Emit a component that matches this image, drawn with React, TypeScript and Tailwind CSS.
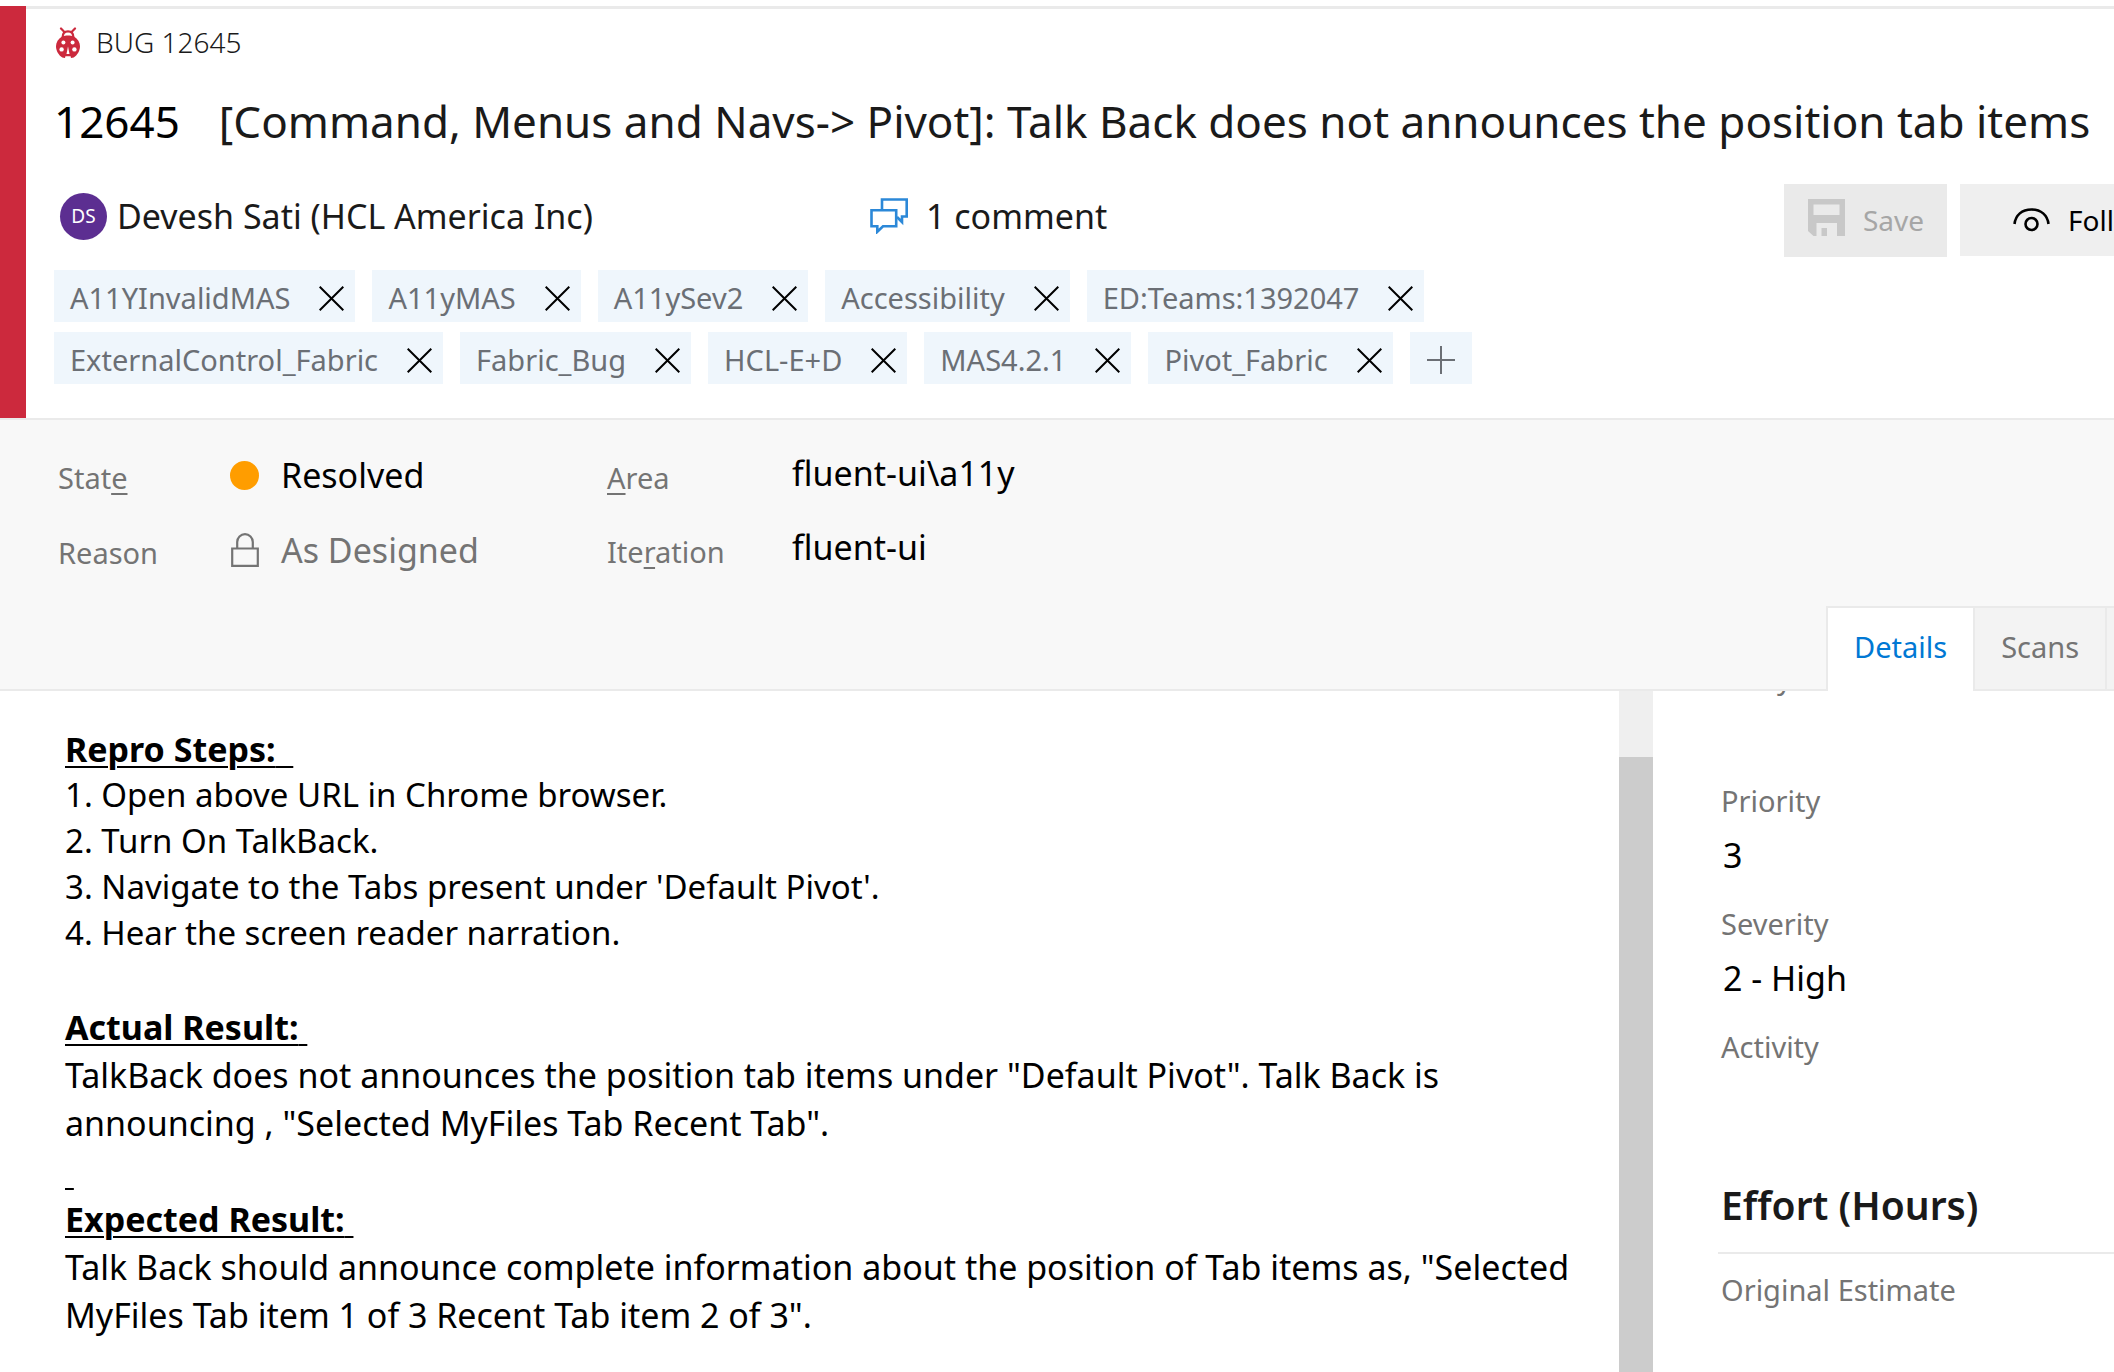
import React from 'react';

const tags = [
  'A11YInvalidMAS',
  'A11yMAS',
  'A11ySev2',
  'Accessibility',
  'ED:Teams:1392047',
  'ExternalControl_Fabric',
  'Fabric_Bug',
  'HCL-E+D',
  'MAS4.2.1',
  'Pivot_Fabric',
];

const steps = [
  '1. Open above URL in Chrome browser.',
  '2. Turn On TalkBack.',
  "3. Navigate to the Tabs present under 'Default Pivot'.",
  '4. Hear the screen reader narration.',
];

const planning = [
  { label: 'Story Points', value: '' },
  { label: 'Priority', value: '3' },
  { label: 'Severity', value: '2 - High' },
  { label: 'Activity', value: '' },
];

function BugIcon() {
  return (
    <svg viewBox="0 0 24 31" className="h-[31px] w-6 shrink-0" aria-hidden="true">
      <g fill="none" stroke="#cc293d" strokeWidth="2.2" strokeLinecap="round">
        <path d="M5 1.5l3.2 3.2M19 1.5l-3.2 3.2" />
        <path d="M6.6 10.5C6.6 6.5 8.800 4.400 12 4.400s5.400 2.100 5.400 6.100" strokeLinecap="butt" />
      </g>
      <path
        d="M6 9.500C8 8.700 10 8.600 12 8.600s4 .1 6 .9c3.800 2.300 6 6 6 9.800 0 4.600-2.600 8.800-6.300 11.300L15 31l-.4-1.700H9.400L9 31l-2.700-.4C2.600 28.100 0 23.900 0 19.300c0-3.800 2.200-7.500 6-9.800z"
        fill="#cc293d"
      />
      <g fill="#fff">
        <circle cx="7.400" cy="15.400" r="2" />
        <circle cx="16.600" cy="15.400" r="2" />
        <circle cx="5.600" cy="22.400" r="2.200" />
        <circle cx="18.400" cy="22.400" r="2.200" />
        <path d="M12 19.500l1.500 7.500h-3z" />
      </g>
    </svg>
  );
}

function CommentsIcon() {
  return (
    <svg viewBox="0 0 38 36" className="h-9 w-[38px] shrink-0" fill="none" stroke="#2b88d8" strokeWidth="2.6" aria-hidden="true">
      <path d="M12 11.500V1.500h24.700v17H32v5.500l-5-5" />
      <path d="M1.500 12.300h24.700v16H13l-5.700 5.500v-5.500H1.500z" />
    </svg>
  );
}

function SaveIcon() {
  return (
    <svg viewBox="0 0 37 37" className="h-[37px] w-[37px] shrink-0" fill="#c8c8c8" aria-hidden="true">
      <path fillRule="evenodd" d="M0 0h37v37h-8V24H8.500v13H5.500L0 32zM5.500 5.500v10.500h26V5.500z" />
      <path d="M13.500 29h5.500v8h-5.500z" />
    </svg>
  );
}

function EyeIcon() {
  return (
    <svg viewBox="0 0 37 24" className="h-6 w-[37px] shrink-0" fill="none" stroke="#000" strokeWidth="2.6" aria-hidden="true">
      <path d="M1.500 16C2.500 7 9 1.500 18.500 1.500S34.500 7 35.500 16" />
      <circle cx="18.500" cy="16" r="6" />
    </svg>
  );
}

function CloseIcon() {
  return (
    <svg viewBox="0 0 25 25" className="size-[25px]" stroke="#000" strokeWidth="2" aria-hidden="true">
      <path d="M.7.7l23.600 23.600M24.300.7L.7 24.300" />
    </svg>
  );
}

function PlusIcon() {
  return (
    <svg viewBox="0 0 28 28" className="size-7" stroke="#6b6f75" strokeWidth="2" aria-hidden="true">
      <path d="M14 0v28M0 14h28" />
    </svg>
  );
}

function LockIcon() {
  return (
    <svg viewBox="0 0 28 34" className="h-[34px] w-7 shrink-0" fill="none" stroke="#747474" strokeWidth="2.2" aria-hidden="true">
      <path d="M1.200 15.500h25.600v17.300H1.200z" />
      <path d="M6.200 15.500V9a7.800 7.800 0 0 1 15.600 0v6.500" />
    </svg>
  );
}

function Header() {
  return (
    <header className="flex shrink-0 pt-1.5">
      <div className="w-[26px] shrink-0 bg-[#cc293d]" />
      <div className="min-w-0 flex-1 border-t-3 border-[#eaeaea] pt-[13px] pb-[34px] pl-7">
        <div className="flex h-10 items-center gap-4 pl-0.5">
          <BugIcon />
          <span className="text-[28px] leading-10 font-light text-[#1a1a1a]">BUG 12645</span>
        </div>
        <h1 className="mt-[29px] flex gap-[39px] text-[44px] leading-[60px] whitespace-nowrap">
          <span className="text-black">12645</span>
          <span className="text-[#1a1a1a]">
            [Command, Menus and Navs-&gt; Pivot]: Talk Back does not announces the position tab items
          </span>
        </h1>
        <div className="mt-[33px] flex h-[73px] items-start text-[34px] leading-[48px] whitespace-nowrap text-[#1a1a1a]">
          <div className="flex h-16 w-[816px] shrink-0 items-center gap-2.5 pl-1.5">
            <span className="flex size-[47px] items-center justify-center rounded-full bg-[#5c2e91] text-[19px] text-white">
              DS
            </span>
            <span>Devesh Sati (HCL America Inc)</span>
          </div>
          <a href="#discussion" className="flex h-16 items-center gap-[18px]">
            <CommentsIcon />
            <span>1 comment</span>
          </a>
          <div className="ml-auto flex w-[330px] shrink-0 gap-[13px] overflow-hidden text-[28px]">
            <button disabled className="flex h-[73px] w-[163px] shrink-0 items-center gap-[18px] bg-[#eaeaea] pb-0.5 pl-6 text-[#a6a6a6]">
              <span className="pb-1">
                <SaveIcon />
              </span>
              Save
            </button>
            <button className="flex h-[72px] shrink-0 items-center gap-[18px] bg-[#efefef] px-[53px] text-black">
              <EyeIcon />
              Follow
            </button>
          </div>
        </div>
        <ul className="mt-[13px] flex max-w-[1480px] flex-wrap gap-x-[17px] gap-y-2.5 text-[29px] leading-10 text-[#6b6f75]">
          {tags.map((tag) => (
            <li key={tag} className="flex h-[52px] items-center gap-[29px] bg-[#eff6fc] pt-1 pr-[11px] pl-4">
              {tag}
              <button aria-label={`Remove ${tag}`}>
                <CloseIcon />
              </button>
            </li>
          ))}
          <li>
            <button aria-label="Add tag" className="flex h-[52px] w-[62px] items-center justify-center bg-[#eff6fc] pt-1">
              <PlusIcon />
            </button>
          </li>
        </ul>
      </div>
    </header>
  );
}

function Classification() {
  return (
    <section className="shrink-0 border-t-2 border-[#eaeaea] bg-[#f8f8f8] text-[34px] leading-[48px]">
      <div className="flex h-[154px] pl-[58px] whitespace-nowrap">
        <dl className="grid w-[549px] shrink-0 grid-cols-[172px_1fr] content-start gap-y-6 pt-[31px]">
          <dt className="pt-[3px] text-[29px] text-[#747474]">
            Stat<span className="underline decoration-2 underline-offset-4">e</span>
          </dt>
          <dd className="flex h-12 items-center gap-[22px] text-black">
            <span className="size-[29px] rounded-full bg-[#ff9d00]" />
            Resolved
          </dd>
          <dt className="pt-[3px] text-[29px] text-[#747474]">Reason</dt>
          <dd className="flex h-12 items-center gap-[22px] pl-px text-[#747474]">
            <LockIcon />
            As Designed
          </dd>
        </dl>
        <dl className="grid grid-cols-[185px_1fr] content-start gap-y-[21px] pt-[29px]">
          <dt className="pt-[5px] text-[29px] text-[#747474]">
            <span className="underline decoration-2 underline-offset-4">A</span>rea
          </dt>
          <dd className="text-black">fluent-ui\a11y</dd>
          <dt className="pt-[5px] text-[29px] text-[#747474]">
            Ite<span className="underline decoration-2 underline-offset-4">r</span>ation
          </dt>
          <dd className="text-black">fluent-ui</dd>
        </dl>
      </div>
      <div className="mt-8 flex h-[85px] text-[29px] leading-10">
        <div className="flex-1 border-b-2 border-[#eaeaea]" />
        <div role="tablist" className="flex w-[288px] shrink-0 overflow-hidden">
          <button role="tab" aria-selected="true" className="shrink-0 border-t-2 border-l-2 border-[#eaeaea] bg-white px-[26px] pb-1.5 text-[#0078d4]">
            Details
          </button>
          <button role="tab" aria-selected="false" className="shrink-0 border-2 border-[#eaeaea] bg-[#f3f3f3] px-[26px] pb-1 text-[#747474]">
            Scans
          </button>
          <div className="flex-1 border-y-2 border-[#eaeaea] bg-[#f3f3f3]" />
        </div>
      </div>
    </section>
  );
}

function Description() {
  return (
    <article className="min-w-0 flex-1 overflow-hidden pt-[35px] pr-6 pl-[65px] text-[34px] leading-[48px] text-black">
      <h2 className="leading-[46px] font-bold underline decoration-2 underline-offset-4">Repro Steps:{'\u00a0\u00a0'}</h2>
      {steps.map((step) => (
        <p key={step} className="text-[33px] leading-[46px]">
          {step}
        </p>
      ))}
      <h2 className="mt-[47px] font-bold underline decoration-2 underline-offset-4">Actual Result:{'\u00a0'}</h2>
      <p>
        TalkBack does not announces the position tab items under "Default Pivot". Talk Back is announcing , "Selected
        MyFiles Tab Recent Tab".
      </p>
      <p className="underline decoration-2 underline-offset-4">{'\u00a0'}</p>
      <h2 className="font-bold underline decoration-2 underline-offset-4">Expected Result:{'\u00a0'}</h2>
      <p>
        Talk Back should announce complete information about the position of Tab items as, "Selected MyFiles Tab item 1
        of 3 Recent Tab item 2 of 3".
      </p>
    </article>
  );
}

function Details() {
  return (
    <aside className="w-[461px] shrink-0 overflow-hidden pl-[65px] text-[29px] leading-10 text-[#747474]">
      <dl className="-mt-[33px]">
        {planning.map((field) => (
          <div key={field.label} className="h-[123px] pl-[3px]">
            <dt>{field.label}</dt>
            <dd className="mt-2.5 pl-0.5 text-[34px] leading-[48px] text-black">{field.value}</dd>
          </div>
        ))}
      </dl>
      <h2 className="mt-[27px] border-b-2 border-[#eaeaea] pb-[19px] pl-[3px] text-[39px] leading-[56px] font-semibold text-[#1a1a1a]">
        Effort (Hours)
      </h2>
      <p className="mt-4 pl-[3px]">Original Estimate</p>
    </aside>
  );
}

export default function App() {
  return (
    <div className="flex h-screen flex-col overflow-hidden bg-white font-['Noto_Sans','Open_Sans',sans-serif]">
      <Header />
      <Classification />
      <main className="flex min-h-0 flex-1">
        <Description />
        <div className="w-[34px] shrink-0 bg-[#efefef] pt-[66px]">
          <div className="h-full bg-[#cccccc]" />
        </div>
        <Details />
      </main>
    </div>
  );
}
